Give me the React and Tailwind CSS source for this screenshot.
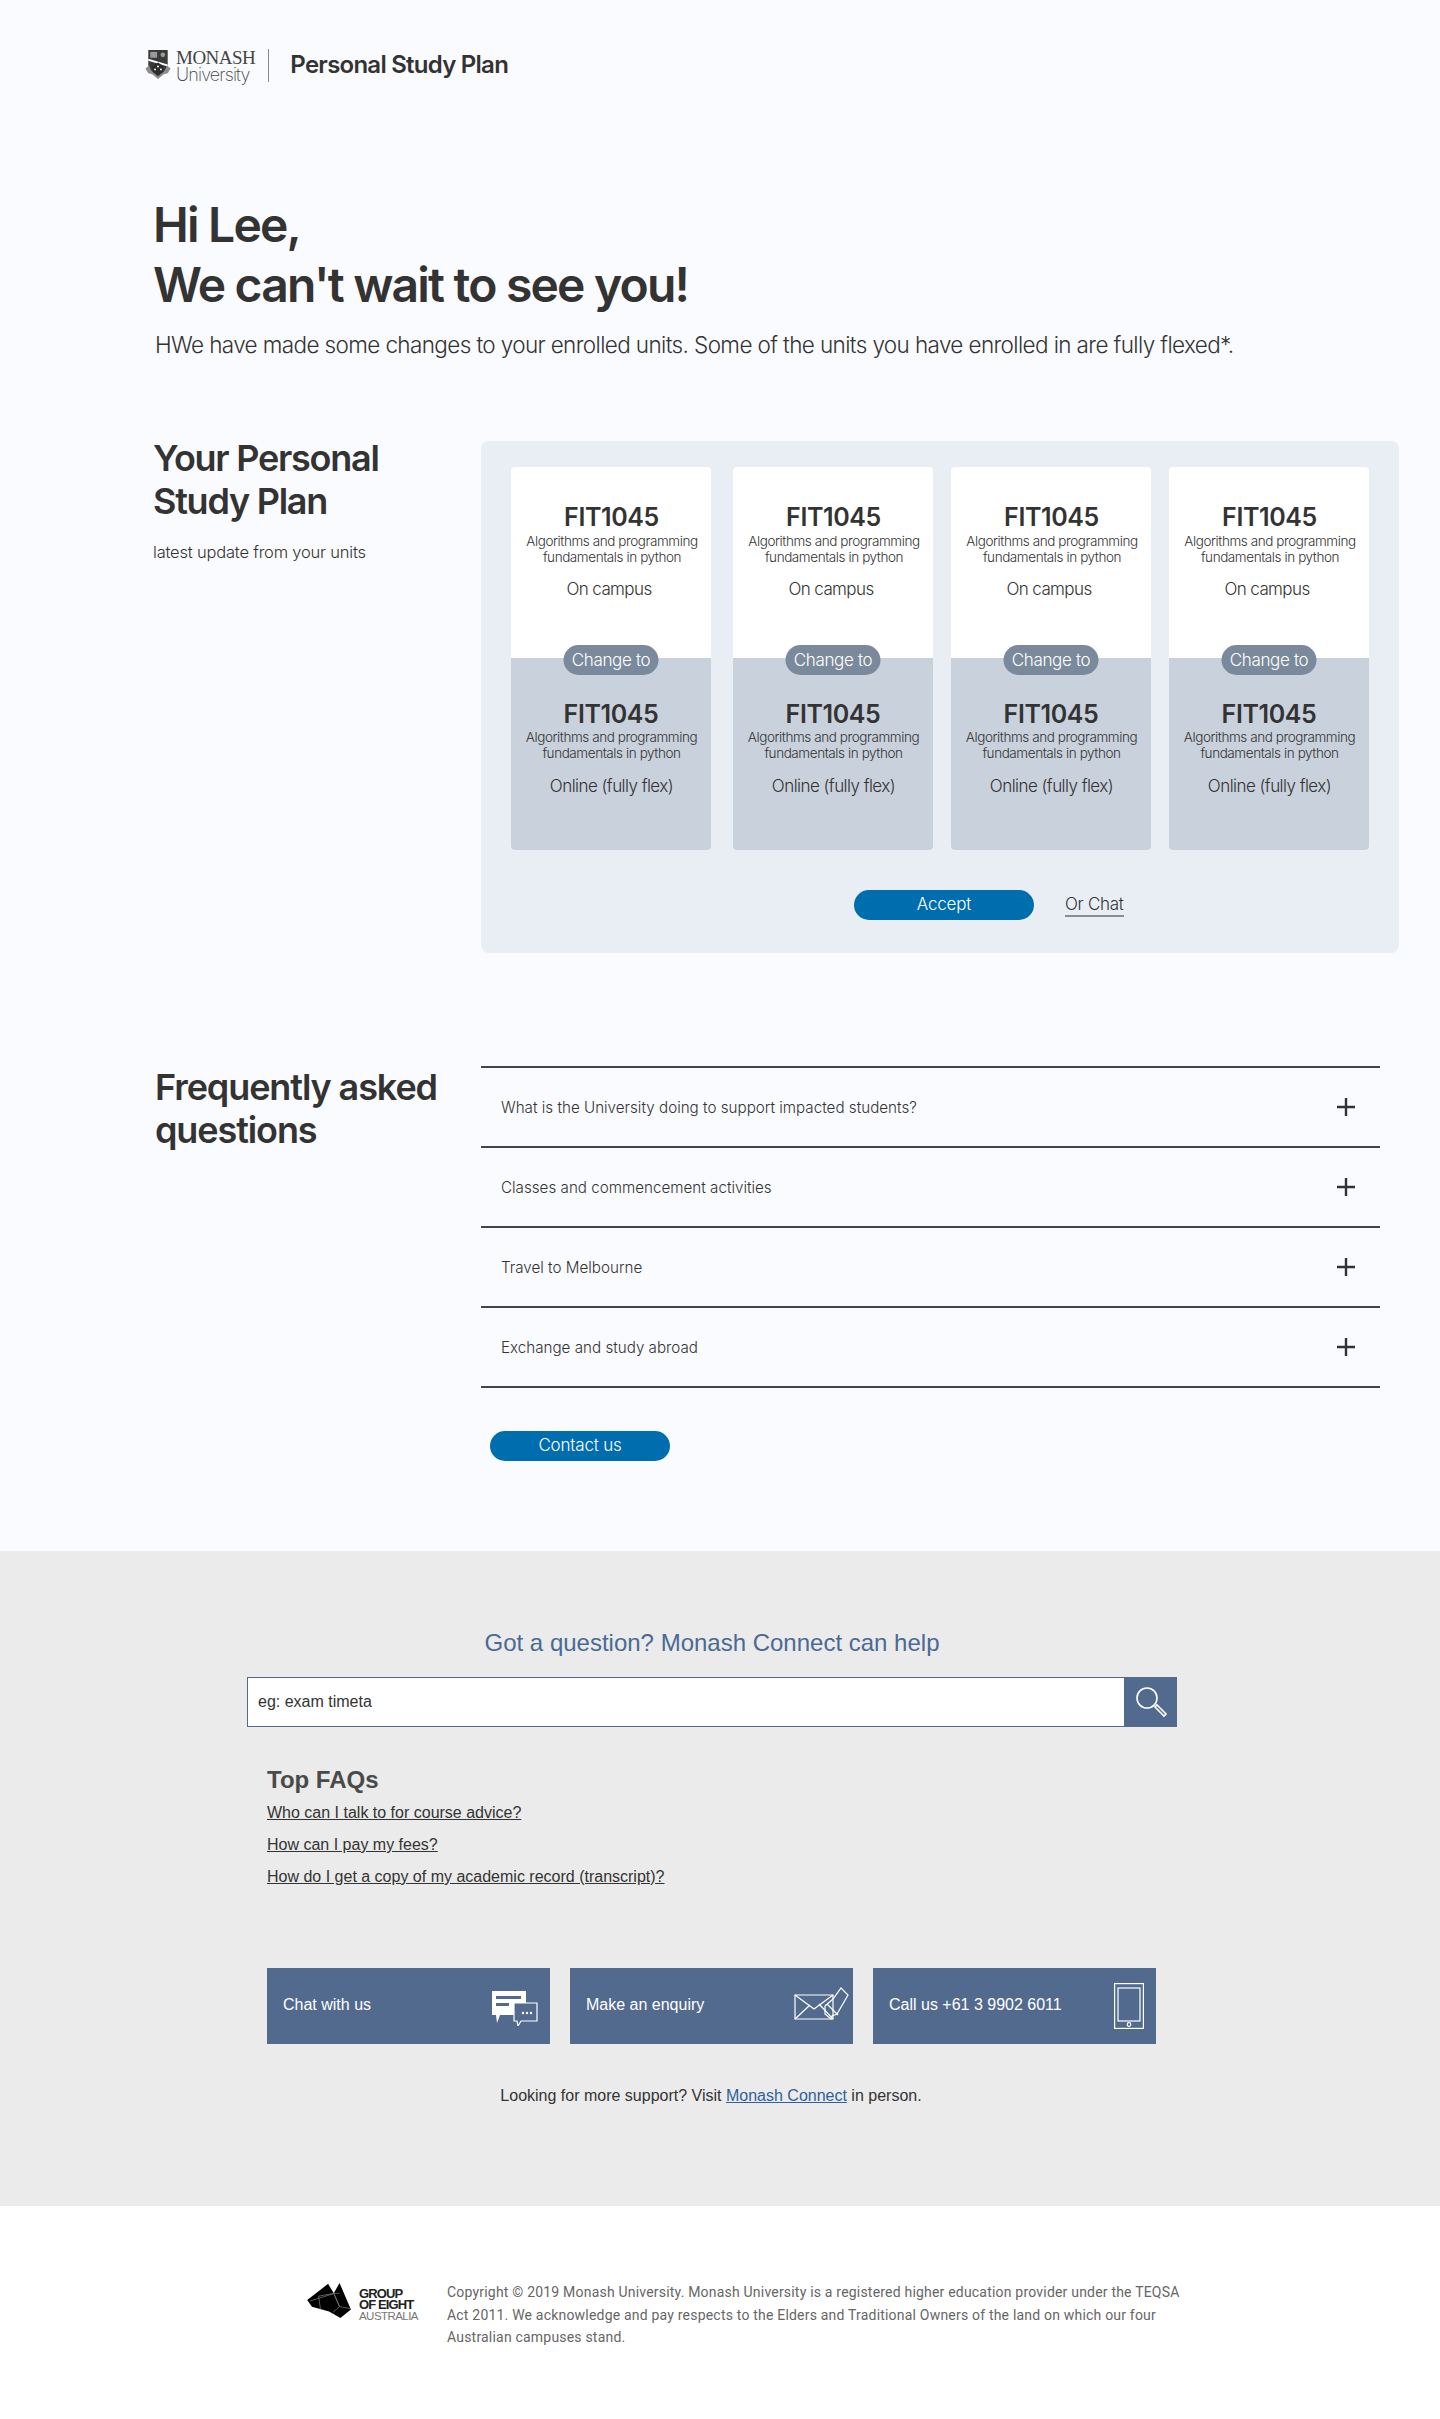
import React from 'react';

const faqs = [
  'What is the University doing to support impacted students?',
  'Classes and commencement activities',
  'Travel to Melbourne',
  'Exchange and study abroad',
];

const units = [0, 1, 2, 3];

const Crest = () => (
  <svg width="28" height="33" viewBox="0 0 28 34">
    <path d="M4 1h20v15c0 5-4 9-10 11C8 25 4 21 4 16z" fill="#3a3a3a" />
    <rect x="6" y="3" width="7" height="6" fill="#9a9a9a" />
    <circle cx="19" cy="6" r="2.4" fill="#9a9a9a" />
    <path d="M4 10l20 6v2L4 12z" fill="#fff" />
    <path d="M1 20l4-3c1 5 4 8 9 10 5-2 8-5 9-10l4 3-3 5-4 1-6 5-6-5-4-1z" fill="#8d8d8d" />
    <path d="M8 18l6-4 6 4-1 6-5 4-5-4z" fill="#2c2c2c" />
    <circle cx="14" cy="18" r="1" fill="#fff" />
    <circle cx="11" cy="21" r="1" fill="#fff" />
    <circle cx="17" cy="21" r="1" fill="#fff" />
  </svg>
);

const UnitCard = () => (
  <div className="relative flex h-[383px] w-[200px] flex-col overflow-hidden rounded bg-white">
    <div className="flex h-[191px] flex-col items-center pt-[35px] text-center text-[#333]">
      <div className="ml-[1px] text-[25px] leading-[30px] font-semibold tracking-[-0.4px]">FIT1045</div>
      <div className="mt-[1px] ml-[2px] text-[13.5px] leading-[16px] font-light tracking-[-0.42px]">
        Algorithms and programming
        <br />
        fundamentals in python
      </div>
      <div className="mt-[13px] mr-[4px] text-[17px] leading-[22px] font-light tracking-[-0.6px]">On campus</div>
    </div>
    <div className="flex flex-1 flex-col items-center bg-[#c9d1dc] pt-[41px] text-center text-[#333]">
      <div className="text-[25px] leading-[30px] font-semibold tracking-[-0.4px]">FIT1045</div>
      <div className="ml-[1px] text-[13.5px] leading-[16px] font-light tracking-[-0.42px]">
        Algorithms and programming
        <br />
        fundamentals in python
      </div>
      <div className="mt-[14px] ml-[1px] text-[17px] leading-[22px] font-light tracking-[-0.55px]">Online (fully flex)</div>
    </div>
    <div className="absolute top-[178px] left-1/2 flex h-[30px] w-[95px] -translate-x-1/2 items-center justify-center rounded-full bg-[#7a8a9c] pt-[2px] text-[17px] font-light tracking-[-0.35px] text-white">
      Change to
    </div>
  </div>
);

const PlusIcon = () => (
  <svg width="18" height="18" viewBox="0 0 18 18" stroke="#333" strokeWidth="2.4">
    <path d="M9 0v18M0 9h18" />
  </svg>
);

const ChatIcon = () => (
  <svg width="46" height="36" viewBox="0 0 46 36" fill="none">
    <path d="M0 1h34v22h-5v2H8l-3 8-1-8H0z" fill="#fff" />
    <rect x="4" y="6" width="25" height="3" fill="#526a8e" />
    <rect x="4" y="13" width="13" height="3" fill="#526a8e" />
    <path d="M22 13h23v18H29l-3 5-1-5h-3z" fill="#526a8e" stroke="#fff" strokeWidth="1.2" />
    <circle cx="31" cy="23" r="1.2" fill="#fff" />
    <circle cx="35" cy="23" r="1.2" fill="#fff" />
    <circle cx="39" cy="23" r="1.2" fill="#fff" />
  </svg>
);

const MailIcon = () => (
  <svg width="55" height="34" viewBox="0 0 55 34" fill="none" stroke="#fff" strokeWidth="1.2">
    <path d="M1 8h38v24H1z" />
    <path d="M1 8l19 14L39 8M1 32l15-14M39 32l-14-15" />
    <path d="M31 19l8-7L47 1l7 7-11 19-5 2-1 3-6-5z" />
    <path d="M33 17l11 11" />
  </svg>
);

const PhoneIcon = () => (
  <svg width="30" height="46" viewBox="0 0 30 46" fill="none" stroke="#fff" strokeWidth="1.2">
    <rect x="0.6" y="0.6" width="28.8" height="44.8" />
    <rect x="4" y="5" width="22" height="33" />
    <circle cx="15" cy="41.5" r="1.8" />
  </svg>
);

const Tile = ({ label, icon, iconClass }) => (
  <div className="flex h-[76px] w-[283px] items-center justify-between bg-[#526a8e] pr-[12px] pl-[16px] text-[16px] text-white">
    <span className="mb-[3px]">{label}</span>
    <div className={iconClass}>{icon}</div>
  </div>
);

const Go8Logo = () => (
  <svg width="46" height="38" viewBox="0 0 48 40">
    <path d="M0 20L22 3l6 10 6-11 12 28-11 9-12-7-18-5z" fill="#000" />
    <path d="M3 21l26-8 5 0M14 30l-2-14 16-3 6 14 11 2M28 13l6 14-7 6" fill="none" stroke="#888" strokeWidth="0.7" />
  </svg>
);

const App = () => {
  return (
    <div className="flex min-h-[2419px] flex-col bg-[#fafbfe] font-['Inter',sans-serif] text-[#333]">
      {/* Header */}
      <header className="flex h-[130px] items-center pl-[144px]">
        <Crest />
        <div className="ml-[4px] text-[#444]">
          <div className="font-['Liberation_Serif',serif] text-[19px] leading-[19px] tracking-[-0.5px]">MONASH</div>
          <div className="mt-[-1px] text-[18px] leading-[17px] font-extralight tracking-[-0.85px]">University</div>
        </div>
        <div className="mr-[21px] ml-[13px] h-[33px] w-[1px] bg-[#888]" />
        <div className="text-[24px] font-semibold tracking-[-0.75px]">Personal Study Plan</div>
      </header>

      {/* Greeting */}
      <section className="pt-[65px] pl-[153px]">
        <h1 className="text-[48px] leading-[60px] font-semibold tracking-[-1.8px]">
          Hi Lee,
          <br />
          We can't wait to see you!
        </h1>
        <p className="mt-[12px] pl-[2px] text-[22.5px] leading-[36px] font-light tracking-[-0.62px]">
          HWe have made some changes to your enrolled units. Some of the units you have enrolled in are fully flexed*.
        </p>
      </section>

      {/* Study plan */}
      <section className="mt-[78px] flex pl-[153px]">
        <div className="w-[328px]">
          <h2 className="mt-[-4px] text-[36px] leading-[43px] font-semibold tracking-[-1.25px]">
            Your Personal
            <br />
            Study Plan
          </h2>
          <p className="mt-[17px] text-[16.5px] leading-[24px] font-light tracking-[-0.2px]">latest update from your units</p>
        </div>
        <div className="h-[512px] w-[918px] rounded-lg bg-[#e9eef5] px-[30px] pt-[26px]">
          <div className="flex gap-[18px]">
            {units.map((u) => (
              <div key={u} className={u === 0 ? 'mr-[4px]' : ''}>
                <UnitCard />
              </div>
            ))}
          </div>
          <div className="mt-[40px] flex items-center pl-[343px]">
            <button className="h-[30px] w-[180px] rounded-full bg-[#006dae] text-[17px] font-light tracking-[-0.2px] text-white">
              Accept
            </button>
            <span className="mt-[1px] ml-[31px] border-b-2 border-[#8a8d92] text-[17px] leading-[21px] font-light tracking-[-0.3px]">
              Or Chat
            </span>
          </div>
        </div>
      </section>

      {/* FAQ */}
      <section className="mt-[113px] flex pl-[155px]">
        <h2 className="w-[326px] text-[36px] leading-[43px] font-semibold tracking-[-1.1px]">
          Frequently asked
          <br />
          questions
        </h2>
        <div className="w-[899px]">
          <div className="border-t-2 border-[#444]">
            {faqs.map((q) => (
              <div key={q} className="flex h-[80px] items-center justify-between border-b-2 border-[#444] pr-[25px] pl-[20px]">
                <span className="mt-[2px] text-[15.2px] font-[350]">{q}</span>
                <PlusIcon />
              </div>
            ))}
          </div>
          <button className="mt-[43px] ml-[9px] block h-[30px] w-[180px] rounded-full bg-[#006dae] text-[17px] font-light tracking-[-0.2px] text-white">
            Contact us
          </button>
        </div>
      </section>

      {/* Monash Connect */}
      <section className="mt-[90px] h-[655px] bg-[#ebebeb] pt-[77px] font-['Liberation_Sans',sans-serif]">
        <h3 className="pr-[16px] text-center text-[24px] leading-[30px] text-[#4a6a94]">Got a question? Monash Connect can help</h3>
        <div className="mt-[19px] ml-[247px] flex h-[50px] w-[930px]">
          <div className="flex flex-1 items-center border border-[#526a8e] bg-white pl-[10px] text-[16px] text-[#333]">
            eg: exam timeta
          </div>
          <div className="flex w-[52px] items-center justify-center bg-[#526a8e]">
            <svg width="34" height="34" viewBox="0 0 34 34" fill="none" stroke="#fff" strokeWidth="1.6">
              <circle cx="13" cy="13" r="10" />
              <path d="M21 22l9 9 2-2-9-9z" />
            </svg>
          </div>
        </div>
        <div className="mt-[38px] ml-[267px]">
          <div className="text-[24px] leading-[30px] font-bold text-[#4a4a4a]">Top FAQs</div>
          <div className="mt-[6px] flex flex-col gap-[8px] text-[16px] leading-[24px] text-[#333] underline">
            <span>Who can I talk to for course advice?</span>
            <span>How can I pay my fees?</span>
            <span>How do I get a copy of my academic record (transcript)?</span>
          </div>
        </div>
        <div className="mt-[79px] ml-[267px] flex gap-[20px]">
          <Tile label="Chat with us" icon={<ChatIcon />} iconClass="mt-[3px]" />
          <Tile label="Make an enquiry" icon={<MailIcon />} iconClass="mr-[-8px] mt-[-4px]" />
          <Tile label="Call us +61 3 9902 6011" icon={<PhoneIcon />} iconClass="mt-[-1px]" />
        </div>
        <p className="mt-[40px] pr-[18px] text-center text-[16px] leading-[24px] text-[#333]">
          Looking for more support? Visit <span className="text-[#2f5f9c] underline">Monash Connect</span> in person.
        </p>
      </section>

      {/* Footer */}
      <footer className="flex flex-1 bg-white pt-[75px] pl-[307px]">
        <Go8Logo />
        <div className="mt-[7px] ml-[6px] w-[56px] font-['Liberation_Sans',sans-serif] text-[13px] leading-[11px] font-bold tracking-[-0.9px] whitespace-nowrap text-[#222]">
          GROUP
          <br />
          OF EIGHT
          <br />
          <span className="text-[11.5px] font-normal tracking-[-0.55px] text-[#777]">AUSTRALIA</span>
        </div>
        <p className="ml-[32px] w-[745px] font-['Roboto',sans-serif] text-[14px] leading-[22.5px] tracking-[0.2px] text-[#666]">
          Copyright © 2019 Monash University. Monash University is a registered higher education provider under the TEQSA Act 2011. We acknowledge and pay respects to the Elders and Traditional Owners of the land on which our four Australian campuses stand.
        </p>
      </footer>
    </div>
  );
};

export default App;
